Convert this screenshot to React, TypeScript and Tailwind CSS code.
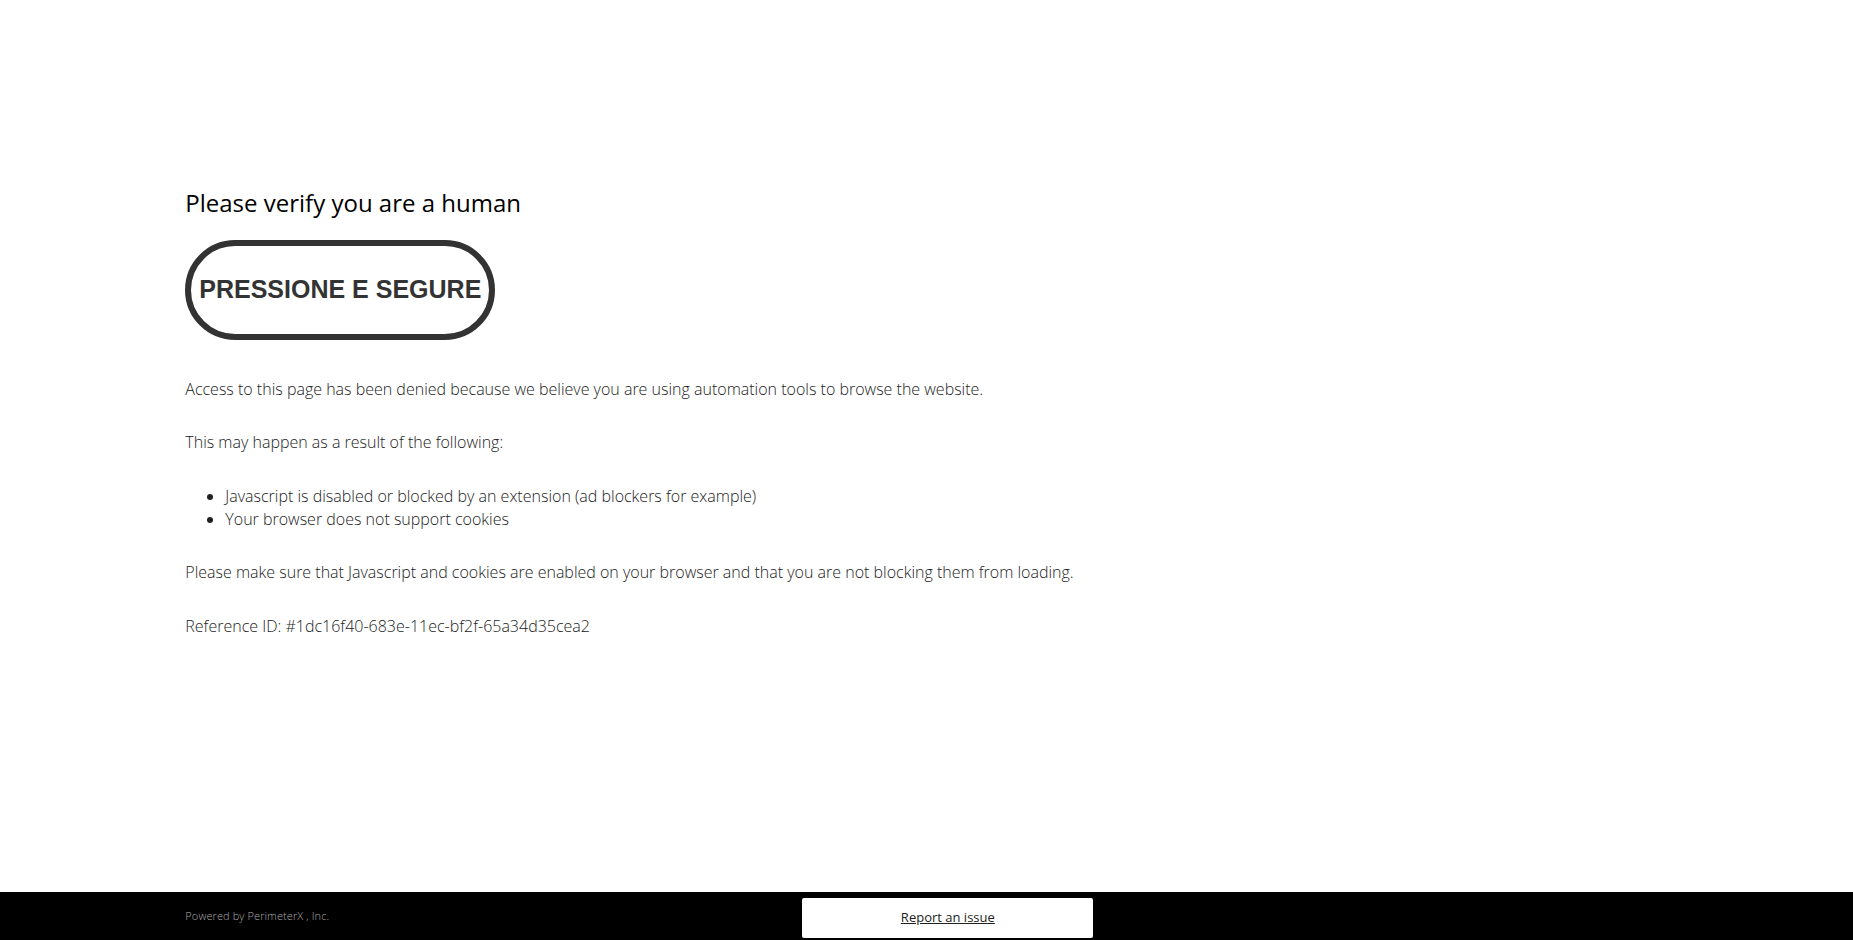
export default function App() {
  return (
    <div className="flex h-screen flex-col bg-white font-['Open_Sans',sans-serif] text-[#222]">
      {/* Content */}
      <main className="flex-1 pl-[10%] pt-[187px]">
        <h1 className="text-[24px] leading-[32px] font-normal text-black">Please verify you are a human</h1>

        <button className="mt-[21px] flex h-[100px] w-[310px] items-center justify-center rounded-[50px] border-[6px] border-[#333] bg-white font-['Liberation_Sans',Arial,sans-serif] text-[25px] font-bold text-[#333]">
          PRESSIONE E SEGURE
        </button>

        <p className="mt-[38px] text-[16px] leading-[23px] font-light">
          Access to this page has been denied because we believe you are using automation tools to browse the website.
        </p>
        <p className="mt-[30px] text-[16px] leading-[23px] font-light">This may happen as a result of the following:</p>
        <ul className="mt-[31px] list-disc pl-10 text-[16px] leading-[23px] font-light">
          <li>Javascript is disabled or blocked by an extension (ad blockers for example)</li>
          <li>Your browser does not support cookies</li>
        </ul>
        <p className="mt-[30px] text-[16px] leading-[23px] font-light">
          Please make sure that Javascript and cookies are enabled on your browser and that you are not blocking them from loading.
        </p>
        <p className="mt-[31px] text-[16px] leading-[23px] font-light">Reference ID: #1dc16f40-683e-11ec-bf2f-65a34d35cea2</p>
      </main>

      {/* Footer */}
      <footer className="flex h-[48px] items-start bg-black">
        <div className="flex h-full w-[43.3%] items-center pl-[10%]">
          <span className="text-[11px] font-light tracking-[0.1px] text-[#aaa]">Powered by PerimeterX , Inc.</span>
        </div>
        <a
          href="#"
          className="mt-[6px] flex h-[40px] w-[291px] items-center justify-center rounded-[2px] bg-white text-[13px] text-[#222] underline"
        >
          Report an issue
        </a>
      </footer>
    </div>
  );
}
